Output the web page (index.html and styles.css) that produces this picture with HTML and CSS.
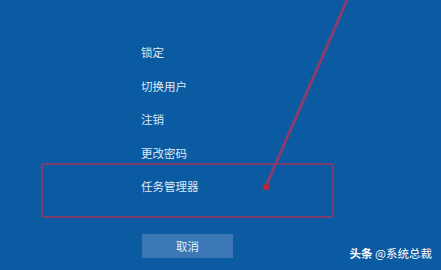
FILE: index.html
```html
<!DOCTYPE html>
<html lang="zh-CN">
<head>
<meta charset="utf-8">
<title>Ctrl+Alt+Del</title>
<link rel="stylesheet" href="styles.css">
</head>
<body>
<main class="screen">
  <ul class="menu">
    <li class="menu-item">锁定</li>
    <li class="menu-item">切换用户</li>
    <li class="menu-item">注销</li>
    <li class="menu-item">更改密码</li>
    <li class="menu-item">任务管理器</li>
  </ul>
  <button class="cancel">取消</button>
</main>
<div class="highlight"></div>
<svg class="arrow" width="441" height="270" viewBox="0 0 441 270">
  <line x1="348" y1="-2" x2="266" y2="186" stroke="#8a3c6e" stroke-width="3" stroke-linecap="round"/>
  <circle cx="266" cy="187" r="3.2" fill="#c0243c"/>
</svg>
<div class="watermark"><b>头条</b> @系统总裁</div>
</body>
</html>
```
FILE: styles.css
```css
html, body {
  margin: 0;
  padding: 0;
}
body {
  width: 441px;
  height: 270px;
  overflow: hidden;
  background: #0b5ba2;
  font-family: "Noto Sans CJK SC", "Noto Sans", sans-serif;
  color: #dce8f3;
  position: relative;
}
.screen {
  display: flex;
  flex-direction: column;
  align-items: flex-start;
  padding: 36px 0 0 141px;
}
.menu {
  list-style: none;
  margin: 0;
  padding: 0;
  display: flex;
  flex-direction: column;
}
.menu-item {
  height: 33.5px;
  line-height: 33.5px;
  font-size: 11.5px;
}
.cancel {
  margin-top: 30px;
  margin-left: 1px;
  width: 91px;
  height: 24px;
  border: none;
  padding: 0;
  background: #3a77b4;
  color: #e4eef7;
  font-family: inherit;
  font-size: 11.5px;
}
.highlight {
  position: absolute;
  left: 41px;
  top: 163px;
  width: 289px;
  height: 51px;
  border: 2.5px solid #7a3f70;
  border-radius: 3px;
}
.arrow {
  position: absolute;
  left: 0;
  top: 0;
}
.watermark {
  position: absolute;
  right: 9px;
  top: 244px;
  font-size: 11.5px;
  line-height: 18px;
  color: #ffffff;
  white-space: nowrap;
}
.watermark b {
  font-weight: 700;
}
```
